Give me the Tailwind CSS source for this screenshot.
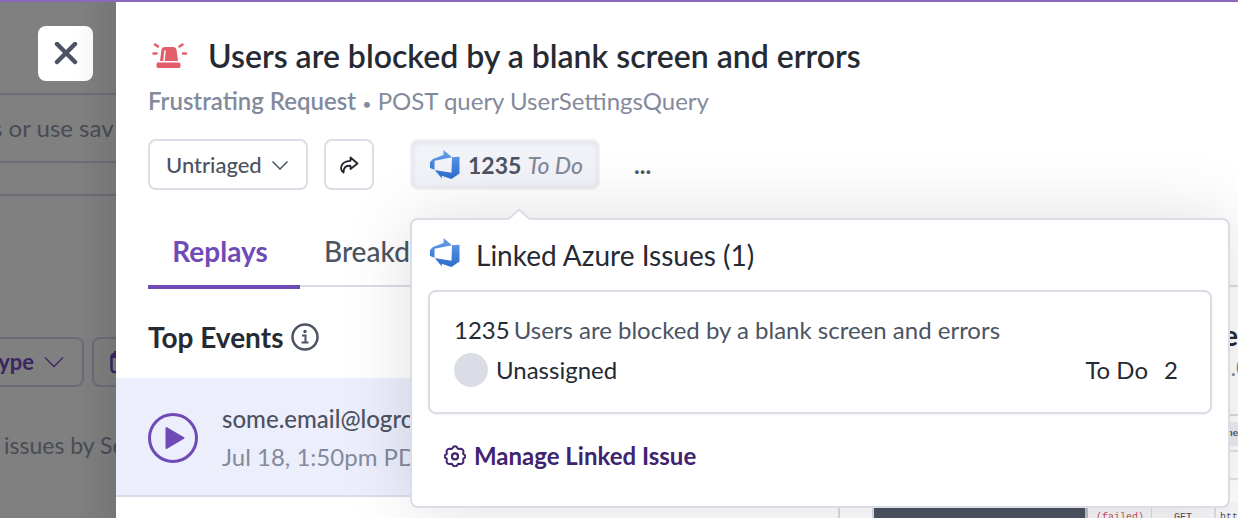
<!DOCTYPE html>
<html lang="en">
<head>
  <meta charset="UTF-8">
  <meta name="viewport" content="width=device-width, initial-scale=1.0">
  <title>Issue Details</title>
  <script src="https://cdn.jsdelivr.net/npm/@tailwindcss/browser@4"></script>
</head>
<body class="h-screen overflow-hidden bg-white font-['Lato','Liberation_Sans',sans-serif] text-[24px] leading-7 text-[#4c5362] antialiased">
  <!-- Azure DevOps logo, shared by the button and the popover -->
  <svg class="absolute size-0">
    <defs>
      <linearGradient id="azureGradient" x1="0" y1="30" x2="0" y2="0" gradientUnits="userSpaceOnUse">
        <stop offset="0" stop-color="#2b6cc9" />
        <stop offset="0.5" stop-color="#4584dc" />
        <stop offset="1" stop-color="#6ba3ee" />
      </linearGradient>
    </defs>
    <symbol id="azure" viewBox="0 0 30 30">
      <path d="M0 18V12L3 9l10.500-4V0L22 7.200l7.500-.5V23.500l-8 5.500-10-3.300.5 3-7.500-9L0 18zM22 7.200L4.500 10.700V20l17 2.800z" fill="url(#azureGradient)" fill-rule="evenodd" />
    </symbol>
  </svg>

  <div class="flex h-full flex-col">
    <div class="h-0.5 shrink-0 bg-[#8a69b9]"></div>
    <div class="flex min-h-0 flex-1">

      <!-- Dimmed page behind the drawer -->
      <aside class="relative w-29 shrink-0 overflow-hidden bg-[#808080] whitespace-nowrap text-[#484c55]">
        <div class="flex h-[93px] items-start border-b-2 border-[#6d6d76] pt-6 pl-[38px]">
          <button type="button" aria-label="Close" class="flex size-[55px] items-center justify-center rounded-lg bg-white">
            <svg class="size-6" viewBox="0 0 24 24" fill="none" stroke="#4c5362" stroke-width="4.5" stroke-linecap="round"><path d="M3 2l18 18M21 2L3 20" /></svg>
          </button>
        </div>
        <div class="flex h-17 items-center border-b-2 border-[#6d6d76]"><span class="-ml-2">s or use sav</span></div>
        <div class="h-[33px] border-b-2 border-[#6d6d76]"></div>
        <div class="mt-[141px] flex gap-2">
          <button type="button" class="flex h-[50px] w-[84px] shrink-0 items-center justify-end gap-2.5 rounded-r-lg border-2 border-l-0 border-[#6e6a78] pr-[18px] text-[22px] font-bold text-[#3b2562]">
            <span>ype</span>
            <svg class="h-3 w-5 shrink-0" viewBox="0 0 20 12" fill="none" stroke="#3b2562" stroke-width="1.3"><path d="M1 1.500l9 9 9-9" /></svg>
          </button>
          <button type="button" aria-label="Date" class="flex h-[50px] w-20 shrink-0 items-center rounded-lg border-2 border-[#6e6a78] pl-4">
            <svg class="size-6" viewBox="0 0 24 24" fill="none" stroke="#3b2562" stroke-width="2.5"><rect x="1.500" y="4" width="20" height="18" rx="3" /><path d="M2 6h20M6 1v4M17 1v4" stroke-width="4" /></svg>
          </button>
        </div>
        <p class="mt-11 pl-1 text-[23px]">issues by Se</p>
        <div class="absolute inset-y-0 right-0 w-10 bg-linear-to-r from-black/0 to-black/8"></div>
      </aside>

      <!-- Issue drawer -->
      <main class="flex min-w-0 flex-1 flex-col bg-white">
        <header class="px-8 pt-[34px]">
          <div class="flex items-center">
            <svg class="ml-1 h-7 w-9 shrink-0" viewBox="0 0 36 28" fill="#e35d6a" stroke="#e35d6a" stroke-linecap="round">
              <rect x="5" y="21" width="23" height="4.500" rx="1" stroke-width="1" />
              <path d="M8 19l1.500-11.500q.4-2.500 3-2.500h9q2.600 0 3 2.500L26 19z" stroke="none" />
              <path d="M12 18.500l1-9.500" stroke="#fff" stroke-width="1.500" />
              <path d="M1.500 11.500h3M31 11.500h3M3 2.500l3 2M30.500 2.500l-3 2" stroke-width="2.5" />
            </svg>
            <h1 class="ml-5 text-[32px] leading-10 font-semibold text-[#262a33]">Users are blocked by a blank screen and errors</h1>
          </div>
          <p class="mt-[11px] h-7 text-[#838a9b]"><span class="font-semibold">Frustrating Request</span> <span class="text-[16px] leading-none">•</span> POST query UserSettingsQuery</p>
          <div class="mt-6 flex items-center">
            <button type="button" class="flex h-[51px] w-40 items-center justify-between rounded-lg border-2 border-[#dadde5] px-4 text-[22px] font-medium">
              Untriaged
              <svg class="mr-0.5 h-2.5 w-4" viewBox="0 0 16 10" fill="none" stroke="#4c5362" stroke-width="1.5"><path d="M.5 1.500L8 9l7.500-7.500" /></svg>
            </button>
            <button type="button" aria-label="Share" class="ml-4 flex h-[51px] w-[50px] items-center justify-center rounded-lg border-2 border-[#dadde5]">
              <svg class="h-[18px] w-5" viewBox="0 0 20 18" fill="none" stroke="#20242c" stroke-width="1.8" stroke-linejoin="round"><path d="M11.500 1.500L18.500 7.500l-7 5.500V9.800C8 9.500 4.500 10.500 4.500 16.500 1 14 .2 5.500 11.500 4.800z" /></svg>
            </button>
            <div class="relative ml-9">
              <button type="button" class="flex h-[51px] w-[190px] items-center rounded-lg border-2 border-[#f0f1f5] bg-[#f2f3f8] pl-[18px] inset-shadow-[0_1px_6px_rgba(60,66,87,0.12)]">
                <svg class="size-[30px]"><use href="#azure" /></svg>
                <span class="ml-2 text-[23px] font-bold">1235</span>
                <span class="ml-1.5 text-[23px] font-medium text-[#838a9b] italic">To Do</span>
              </button>

              <!-- Linked issues popover -->
              <section class="absolute top-[79px] left-0 z-10 h-[290px] w-[820px] rounded-lg border-2 border-[#dadde5] bg-white px-4 shadow-[0_0_70px_rgba(0,0,0,0.13)]">
                <svg class="absolute -top-3 left-[95px] h-3 w-6" viewBox="0 0 24 12"><path d="M0 12L12 1l12 11z" fill="#fff" /><path d="M1 11.500L12 1.500l11 10" fill="none" stroke="#dadde5" stroke-width="2" /></svg>
                <h2 class="flex h-[70px] items-center text-[28px] text-[#262a33]">
                  <svg class="mr-4 mb-1 ml-0.5 size-[30px]"><use href="#azure" /></svg>
                  Linked Azure Issues (1)
                </h2>
                <div class="rounded-lg border-2 border-[#dadde5] px-6 py-6 text-[#262a33] shadow-sm shadow-black/5">
                  <p class="flex h-9 gap-1">1235 <span class="text-[#4c5362]">Users are blocked by a blank screen and errors</span></p>
                  <div class="flex h-9 items-center">
                    <span class="mr-2 size-[34px] rounded-full bg-[#dadde5]"></span>
                    <span>Unassigned</span>
                    <span class="ml-auto">To Do</span>
                    <span class="mr-2 ml-4">2</span>
                  </div>
                </div>
                <button type="button" class="mt-7 ml-4 flex items-center font-bold text-[#40246f]">
                  <svg class="mr-2 size-[22px]" viewBox="1 1 22 22" fill="none" stroke="#40246f" stroke-width="2" stroke-linejoin="round"><path d="M9.300 4.500Q10 2.200 12 2.200t2.700 2.300q.4.700 1.200.5 2.400-.7 3.700.6t.6 3.600q-.2.800.4 1.200 1.800.6 1.800 2t-1.800 2q-.6.400-.4 1.200.7 2.300-.6 3.600t-3.700.6q-.8-.2-1.200.5-.7 2-2.700 2t-2.700-2q-.4-.7-1.200-.5-2.400.7-3.700-.6t-.6-3.600q.2-.8-.4-1.200-1.800-.6-1.800-2t1.800-2q.6-.4.400-1.200-.7-2.300.6-3.600t3.700-.6q.8.200 1.200-.5z" /><circle cx="12" cy="12.400" r="3" stroke-width="2.200" /></svg>
                  Manage Linked Issue
                </button>
              </section>
            </div>
            <button type="button" aria-label="More" class="ml-[34px] font-bold">...</button>
          </div>
        </header>

        <nav class="mt-[27px] ml-8 flex h-[70px] items-start border-b-2 border-[#dadde5] text-[28px] font-medium">
          <a href="#replays" class="-mb-1 flex h-[72px] w-[152px] justify-center border-b-4 border-[#6f4bb8] pt-5 pr-2 font-bold text-[#6f4bb8]">Replays</a>
          <a href="#breakdown" class="pt-5 pl-6">Breakdown</a>
        </nav>

        <div class="flex min-h-0 flex-1">
          <section class="flex-1 border-r-2 border-[#dadde5]">
            <h3 class="flex h-[91px] items-center pt-2 pl-8 text-[28px] font-bold text-[#262a33]">
              Top Events
              <svg class="ml-2 size-7" viewBox="0 0 28 28" fill="none" stroke="#4c5362" stroke-width="2.5"><circle cx="14" cy="14" r="12.5" /><path d="M11 12.500h3.500v7M10.500 19.500h7" stroke-width="2" /><circle cx="14" cy="8.500" r="1.7" fill="#4c5362" stroke="none" /></svg>
            </h3>
            <article class="flex h-[119px] items-center border-b-2 border-[#dadde8] bg-[#eceefc] pt-0.5 pl-8">
              <button type="button" aria-label="Play" class="flex size-[50px] items-center justify-center rounded-full border-3 border-[#6f4bb8] pl-1">
                <svg class="h-6 w-5" viewBox="0 0 20 24" fill="#6f4bb8" stroke="#6f4bb8" stroke-width="2" stroke-linejoin="round"><path d="M1.500 2l17 10-17 10z" /></svg>
              </button>
              <div class="ml-6 leading-[38px]">
                <p class="font-medium">some.email@logrocket</p>
                <p class="text-[#838a9b]">Jul 18, 1:50pm PDT</p>
              </div>
            </article>
          </section>
          <section class="flex w-[398px] flex-col overflow-hidden">
            <div class="flex h-[127px] shrink-0 flex-col items-end pt-8 leading-8">
              <p class="text-[28px] font-bold text-[#262a33]">e</p>
              <p class="-mr-3 text-[#838a9b]">.0</p>
            </div>
            <!-- Player and network requests -->
            <div class="ml-8 flex flex-1 border-t-2 border-l-2 border-[#dadde5] text-[10px] leading-5">
              <div class="w-[211px] bg-[#4c5362]"></div>
              <div class="w-[3px] bg-[#c0c0c0]"></div>
              <div class="min-w-0 flex-1">
                <div class="mt-1.5 h-6 bg-[#eceef4] text-right font-bold">ne</div>
                <div class="mt-1 h-7 border-t-2 border-[#e2e4ea]"></div>
                <div class="h-6 border-t-2 border-[#e2e4ea]"></div>
                <div class="flex h-8 bg-[#f7f7fa] font-['Liberation_Mono',monospace]">
                  <span class="w-16 shrink-0 border-r border-[#dadde5] pt-1.5 pl-2 text-[#c6505c]">(failed)</span>
                  <span class="w-16 shrink-0 border-r-2 border-[#dadde5] pt-1.5 text-center">GET</span>
                  <span class="pt-1.5 pl-1">http</span>
                </div>
              </div>
            </div>
          </section>
        </div>
      </main>
    </div>
  </div>
</body>
</html>
